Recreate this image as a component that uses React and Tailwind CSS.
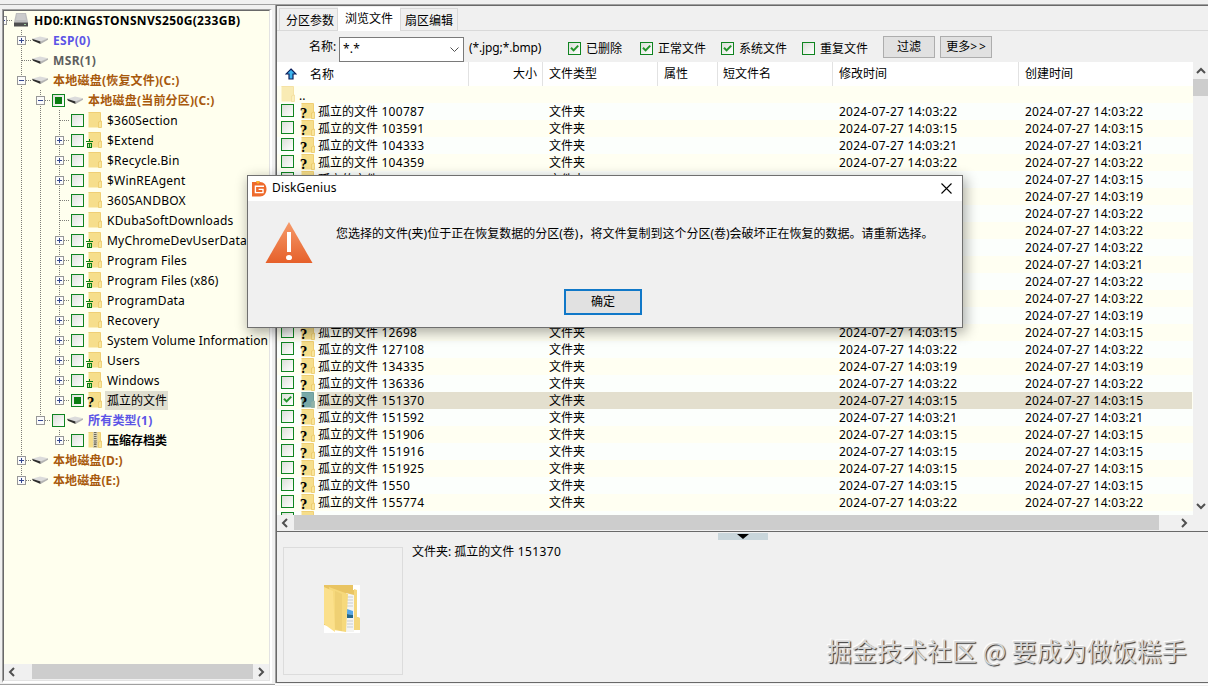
import React from 'react';
import clsx from 'clsx';

const tree = [
  { depth: 0, open: true, icon: 'disk', label: 'HD0:KINGSTONSNVS250G(233GB)', style: 'font-bold text-black tracking-[0.34px]' },
  { depth: 1, open: false, icon: 'drive', label: 'ESP(0)', style: 'font-bold text-[#5c55e6] tracking-[0.3px]' },
  { depth: 1, icon: 'drive', label: 'MSR(1)', style: 'font-bold text-[#5e5e5e] tracking-[0.4px]' },
  { depth: 1, open: true, icon: 'drive', label: '本地磁盘(恢复文件)(C:)', style: 'font-bold text-[#a8590c] tracking-[0.22px]' },
  { depth: 2, open: true, check: 'partial', icon: 'drive', label: '本地磁盘(当前分区)(C:)', style: 'font-bold text-[#a8590c] tracking-[0.22px]' },
  { depth: 3, check: 'off', icon: 'folder', label: '$360Section' },
  { depth: 3, open: false, check: 'off', icon: 'folder', deleted: true, label: '$Extend' },
  { depth: 3, open: false, check: 'off', icon: 'folder', label: '$Recycle.Bin' },
  { depth: 3, open: false, check: 'off', icon: 'folder', label: '$WinREAgent' },
  { depth: 3, check: 'off', icon: 'folder', label: '360SANDBOX' },
  { depth: 3, check: 'off', icon: 'folder', label: 'KDubaSoftDownloads' },
  { depth: 3, open: false, check: 'off', icon: 'folder', deleted: true, label: 'MyChromeDevUserData' },
  { depth: 3, open: false, check: 'off', icon: 'folder', deleted: true, label: 'Program Files' },
  { depth: 3, open: false, check: 'off', icon: 'folder', deleted: true, label: 'Program Files (x86)' },
  { depth: 3, open: false, check: 'off', icon: 'folder', deleted: true, label: 'ProgramData' },
  { depth: 3, open: false, check: 'off', icon: 'folder', label: 'Recovery' },
  { depth: 3, open: false, check: 'off', icon: 'folder', label: 'System Volume Information', style: 'text-black tracking-[0.14px]' },
  { depth: 3, open: false, check: 'off', icon: 'folder', deleted: true, label: 'Users' },
  { depth: 3, open: false, check: 'off', icon: 'folder', deleted: true, label: 'Windows' },
  { depth: 3, open: false, check: 'partial', icon: 'lost', label: '孤立的文件', selected: true, last: true, style: 'text-black' },
  { depth: 2, open: true, check: 'off', icon: 'drive', label: '所有类型(1)', style: 'font-bold text-[#5c55e6] tracking-[0.2px]', last: true },
  { depth: 3, open: false, check: 'off', icon: 'zip', label: '压缩存档类', style: 'font-bold text-black', last: true, hide: [2] },
  { depth: 1, open: false, icon: 'drive', label: '本地磁盘(D:)', style: 'font-bold text-[#a8590c] tracking-[0.2px]' },
  { depth: 1, open: false, icon: 'drive', label: '本地磁盘(E:)', style: 'font-bold text-[#a8590c] tracking-[0.1px]', last: true },
];

const files = [
  ['100787', '22'], ['103591', '15'], ['104333', '21'], ['104359', '22'],
  ['104781', '15'], ['105264', '19'], ['106010', '22'], ['107352', '22'],
  ['108116', '22'], ['110273', '21'], ['112904', '22'], ['115530', '22'],
  ['118247', '19'], ['12698', '15'], ['127108', '22'], ['134335', '19'],
  ['136336', '22'], ['151370', '15'], ['151592', '21'], ['151906', '15'],
  ['151916', '15'], ['151925', '15'], ['1550', '15'], ['155774', '22'],
];

const filters = [
  { label: '已删除', checked: true, style: 'w-[72px]' },
  { label: '正常文件', checked: true, style: 'w-[81px]' },
  { label: '系统文件', checked: true, style: 'w-[81px]' },
  { label: '重复文件', checked: false, style: 'w-[81px]' },
];

function CheckBox({ state }) {
  return (
    <span className="relative block w-[13px] h-[13px] shrink-0 border border-[#0f8420] bg-linear-to-br from-[#dcdfd9] to-white">
      {state === 'on' && (
        <svg className="block w-[11px] h-[11px]" viewBox="0 0 11 11">
          <path d="M2 4.8 L4.6 7.4 L9.2 2.6" fill="none" stroke="#22952a" strokeWidth="2" />
        </svg>
      )}
      {state === 'partial' && <span className="block w-[7px] h-[7px] m-[2px] bg-[#0b7d12]" />}
    </span>
  );
}

function Folder({ selected, zip }) {
  return (
    <svg className="block w-[14px] h-[16px]" viewBox="0 0 14 16">
      <path d="M0.5 0.5 H12.5 V15.5 H0.5 Z" fill={selected ? '#7aa9a8' : '#f6de8b'} />
      <path d="M0.5 0.5 H12.5 V9" fill="none" stroke={selected ? '#6b9d9d' : '#f0cf74'} />
      <path d="M10.5 15.5 V10 L13.5 9 V15.5 Z" fill={selected ? '#8fb3a8' : '#f9e59a'} stroke={selected ? '#8caea4' : '#ebc968'} strokeWidth="0.8" />
      {zip && (
        <>
          <path d="M5 0 H9.5 V16 H5 Z" fill="#d9d2b5" />
          <path d="M7.2 0 V16" stroke="#6f6b5c" strokeWidth="2.6" strokeDasharray="1 1" />
          <path d="M6 8 H8.5 V12 H6 Z" fill="#9a9686" />
        </>
      )}
    </svg>
  );
}

function Question() {
  return (
    <span className="absolute left-[-1px] top-[4px] font-['DejaVu_Serif',serif] font-bold text-[12px] leading-[14px] text-black">?</span>
  );
}

function Drive() {
  return (
    <svg className="block w-4 h-[10px]" viewBox="0 0 16 10">
      <path d="M0 3.8 L8 1.4 L16 3.2 L8.6 7 Z" fill="#dcdcdc" />
      <path d="M0 3.8 L8.6 6.6 L8.6 9 L1 5.8 Z" fill="#2e2e2e" />
      <path d="M8.6 6.4 L16 3.2 V4.8 L8.6 9 Z" fill="#b4b4b4" />
    </svg>
  );
}

function Disk() {
  return (
    <svg className="block w-[14px] h-4" viewBox="0 0 14 16">
      <path d="M2 1 H12 L14 10 H0 Z" fill="#bdbdbd" />
      <path d="M3 2 H11 L12 8 H2 Z" fill="#cbcbcb" />
      <path d="M0 10 H14 V14.5 H0 Z" fill="#4f4f4f" />
      <path d="M0 10.5 H14" stroke="#8c8c8c" />
      <path d="M10 12.5 H12" stroke="#9fd09f" />
    </svg>
  );
}

function Trash() {
  return (
    <svg className="absolute left-[-2px] top-[7px] w-[8px] h-[10px]" viewBox="0 0 8 10">
      <path d="M3 0 H4 V2 H3 Z M0 2 H7 V3 H0 Z" fill="#0b7d12" />
      <path d="M1 4 H6 V9 H1 Z" fill="#c9e0a0" />
      <path d="M1 4 H6 V5 H1 Z M1 8 H6 V9 H1 Z M1 4 H2 V9 H1 Z M3 4 H4 V9 H3 Z M5 4 H6 V9 H5 Z" fill="#0b7d12" />
    </svg>
  );
}

function NodeIcon({ node }) {
  if (node.icon === 'disk') return <Disk />;
  if (node.icon === 'drive') return <Drive />;
  return (
    <span className="relative block">
      <Folder zip={node.icon === 'zip'} />
      {node.deleted && <Trash />}
      {node.icon === 'lost' && <Question />}
    </span>
  );
}

function Guide({ node, own }) {
  const line = { stroke: '#7d7d78', strokeDasharray: '1 1', fill: 'none' };
  return (
    <svg className="block w-[19px] h-5 shrink-0" viewBox="0 0 19 20" shapeRendering="crispEdges">
      {node.depth > 0 && <path d={own && node.last ? 'M9.5 0 V10' : 'M9.5 0 V20'} {...line} />}
      {own && <path d="M10 10.5 H19" {...line} />}
      {own && node.open !== undefined && (
        <>
          <rect x="5.5" y="6.5" width="8" height="8" fill="#fbfbfb" stroke="#979797" />
          <path d={node.open ? 'M7 10.5 H12' : 'M7 10.5 H12 M9.5 8 V13'} stroke="#35478f" />
        </>
      )}
    </svg>
  );
}

function TreeRow({ node }) {
  const guides = [];
  for (let level = 1; level <= node.depth; level++) {
    guides.push(
      node.hide?.includes(level)
        ? <span key={level} className="w-[19px] shrink-0" />
        : <Guide key={level} node={level === node.depth ? node : { depth: level }} own={level === node.depth} />
    );
  }
  return (
    <div className={clsx('flex items-center h-5 whitespace-nowrap', node.depth === 0 ? 'ml-[-11px]' : 'ml-2')}>
      {node.depth === 0 ? <Guide node={node} own /> : guides}
      {node.check && <span className="ml-[2px]"><CheckBox state={node.check} /></span>}
      <span className={clsx('shrink-0', node.depth === 3 ? 'ml-1' : node.depth === 1 ? 'ml-px' : 'ml-[2px]')}>
        <NodeIcon node={node} />
      </span>
      <span
        className={clsx(
          'leading-[19px]',
          node.style || 'text-black tracking-[0.2px]',
          node.depth === 3 ? 'ml-[3px] pl-[2px] pr-px' : node.depth === 0 ? 'ml-[6px]' : 'ml-[5px]',
          node.selected && 'bg-[#e0dfd0]'
        )}
      >
        {node.label}
      </span>
    </div>
  );
}

function Arrow({ dir }) {
  const paths = {
    left: 'M7 1 L3 5 L7 9',
    right: 'M3 1 L7 5 L3 9',
    up: 'M1 7 L5 3 L9 7',
    down: 'M1 3 L5 7 L9 3',
  };
  return (
    <svg className="block w-[10px] h-[10px]" viewBox="0 0 10 10">
      <path d={paths[dir]} fill="none" stroke="#505050" strokeWidth="2" />
    </svg>
  );
}

function TreePanel() {
  return (
    <aside className="w-[275px] shrink-0 flex flex-col border-t border-[#a0a0a0]">
      <div className="h-[676px] mt-1 ml-[2px] w-[270px] flex flex-col border-t border-l border-[#a0a0a0] border-r-2 border-r-white border-b-2 border-b-white">
        <div className="flex-1 flex flex-col overflow-hidden border-t border-l border-t-[#696969] border-l-[#696969] border-r border-b border-r-[#e3e3e3] border-b-[#e3e3e3]">
          <div className="flex-1 overflow-hidden bg-[#ffffee]">
            <div className="mt-[-1px]">
              {tree.map((node, i) => <TreeRow key={i} node={node} />)}
            </div>
          </div>
          <div className="h-[15px] mb-px flex items-center justify-between bg-[#f0f0f0] shrink-0">
            <span className="w-7 pl-[3px]"><Arrow dir="left" /></span>
            <span className="h-full flex-1 bg-[#cdcdcd]" />
            <span className="w-4 pl-[3px]"><Arrow dir="right" /></span>
          </div>
        </div>
      </div>
      <div className="mt-[1px] h-px bg-[#a0a0a0]" />
      <div className="h-px bg-white" />
    </aside>
  );
}

function Toolbar() {
  return (
    <>
      <div className="h-[25px] flex items-end pl-[2px] border-b border-[#d9d9d9]">
        <span className="w-[59px] h-[22px] pl-[6px] border border-b-0 border-[#d9d9d9] leading-[24px]">分区参数</span>
        <span className="w-[62px] h-6 mb-[-1px] bg-white text-center leading-[24px]">浏览文件</span>
        <span className="w-[58px] h-[22px] border border-b-0 border-[#d9d9d9] text-center leading-[24px]">扇区编辑</span>
      </div>
      <div className="h-[31px] flex items-start">
        <span className="w-[62px] pl-8 pt-[6px] leading-[19px] whitespace-nowrap">名称:</span>
        <span className="w-[125px] h-[25px] mt-[6px] pl-[3px] pr-1 flex items-center justify-between bg-white border border-[#7a7a7a]">
          <span className="pb-[2px] tracking-[0.2px]">*.*</span>
          <svg className="w-[9px] h-[9px]" viewBox="0 0 9 9"><path d="M0.5 2.5 L4.5 6.5 L8.5 2.5" fill="none" stroke="#505050" /></svg>
        </span>
        <span className="w-[104px] pl-[5px] pt-2 leading-[18px] tracking-[-0.12px]">(*.jpg;*.bmp)</span>
        {filters.map(f => (
          <span key={f.label} className={clsx('flex items-center gap-[5px] mt-2 h-[18px] whitespace-nowrap', f.style)}>
            <CheckBox state={f.checked ? 'on' : 'off'} />
            <span className="pt-[2px]">{f.label}</span>
          </span>
        ))}
        <button className="w-[52px] h-[22px] mt-[5px] bg-[#e1e1e1] border border-[#adadad] leading-5">过滤</button>
        <button className="w-[52px] h-[22px] mt-[5px] ml-[5px] pl-[2px] bg-[#e1e1e1] border border-[#adadad] leading-5 whitespace-nowrap">
          更多<span className="tracking-[2px]">&gt;&gt;</span>
        </button>
      </div>
    </>
  );
}

function FileRow({ name, sec, index }) {
  const selected = name === '151370';
  return (
    <div className={clsx('flex h-[17px] leading-[17px] shrink-0 whitespace-nowrap', index % 2 ? 'bg-[#fffff2]' : 'bg-[#fcfffc]')}>
      <span className="w-6 pl-1 pt-px"><CheckBox state={selected ? 'on' : 'off'} /></span>
      <span className="relative w-4 shrink-0">
        <Folder selected={selected} />
        {name && <Question />}
      </span>
      {name && (
        <div className={clsx('flex flex-1 pl-px', selected && 'bg-[#e3dfce]')}>
          <span className="w-[231px]">孤立的文件<span className="tracking-[0.3px]"> {name}</span></span>
          <span className="w-[290px]">文件夹</span>
          <span className="w-[186px] tracking-[0.26px]">2024-07-27 14:03:{sec}</span>
          <span className="tracking-[0.26px]">2024-07-27 14:03:{sec}</span>
        </div>
      )}
      <span className="w-px" />
    </div>
  );
}

function FileList() {
  return (
    <div className="h-[453px] flex shrink-0">
      <div className="w-[916px] flex flex-col overflow-hidden bg-[#fffff2]">
        <div className="h-6 flex shrink-0 bg-white leading-[23px] *:border-r *:border-[#e2e2e2] *:shrink-0">
          <div className="w-[192px] flex items-center gap-[13px] pl-2">
            <svg className="w-3 h-3" viewBox="0 0 12 12">
              <path d="M6 1 L11 6 H8 V11 H4 V6 H1 Z" fill="#3cb4ee" stroke="#0c1f5c" strokeWidth="1.2" />
            </svg>
            <span>名称</span>
          </div>
          <div className="w-[74px] text-right pr-[5px]">大小</div>
          <div className="w-[115px] pl-[6px]">文件类型</div>
          <div className="w-[60px] pl-[6px]">属性</div>
          <div className="w-[115px] pl-[5px]">短文件名</div>
          <div className="w-[186px] pl-[6px]">修改时间</div>
          <div className="w-[174px] pl-[6px] border-r-0!">创建时间</div>
        </div>
        <div className="h-[17px] flex shrink-0 pl-1 gap-1 leading-[19px]">
          <span className="opacity-60"><Folder /></span>
          <span>..</span>
        </div>
        {files.map(([name, sec], i) => <FileRow key={name} name={name} sec={sec} index={i} />)}
        {/* row cut by the scrollbar, only its icons peek out */}
        <FileRow index={files.length} />
      </div>
      <div className="w-[15px] flex flex-col items-center bg-[#f0f0f0]">
        <span className="h-[17px] pt-1"><Arrow dir="up" /></span>
        <span className="w-full h-[17px] bg-[#cdcdcd]" />
        <span className="mt-auto h-[14px]"><Arrow dir="down" /></span>
      </div>
    </div>
  );
}

function PreviewFolder() {
  return (
    <svg className="w-9 h-12" viewBox="0 0 36 48">
      <path d="M0 0 H36 V48 H0 Z" fill="#fff" />
      <path d="M0 0 H29 V5 H33 V32 L36 33 V45 H30 L0 40 Z" fill="#e9c462" />
      <path d="M30 4 L33 5 V32 L36 33 V45 H30 Z" fill="#f5d77b" />
      <path d="M22 8 L30 10 V47 H22 Z" fill="#f4f4f2" />
      <path d="M23 12 H29 M23 15 H29 M23 18 H29 M23 21 H29 M23 36 H29 M23 39 H29 M23 42 H29" stroke="#c8cdd2" strokeWidth="1" />
      <path d="M23 24 L29 26 V30 L23 29 Z" fill="#55a7e8" />
      <path d="M23 29 L29 30 V33 H23 Z" fill="#23668a" />
      <path d="M5 2 L24 9 L22 47 L10 45 Z" fill="#f6d97c" />
      <path d="M11 6 L18 9 V46 L11 44 Z" fill="#e8c769" opacity="0.5" />
      <path d="M0 2 L9 6 L11 47 L0 39 Z" fill="#fbe08b" />
    </svg>
  );
}

function BottomPanel() {
  return (
    <div className="relative flex-1 flex border-t border-[#696969] pt-[15px] pl-[6px]">
      <div className="w-[120px] h-[128px] flex items-center justify-center border border-[#dcdcdc]">
        <span className="pr-[2px] pb-1"><PreviewFolder /></span>
      </div>
      <p className="ml-[9px] mt-[-4px] leading-[18px]">文件夹: 孤立的文件<span className="tracking-[0.35px]"> 151370</span></p>
      {/* splitter handle */}
      <span className="absolute left-[441px] top-px w-[50px] h-[7px] flex justify-center bg-[#c9d6db]">
        <svg className="w-3 h-[6px]" viewBox="0 0 12 6"><path d="M0 1 H12 L6 6 Z" fill="#000" /></svg>
      </span>
    </div>
  );
}

function Dialog() {
  return (
    <div className="absolute left-[247px] top-[175px] w-[716px] h-[153px] flex flex-col border border-[#6f6f6f] bg-[#f0f0f0] shadow-[2px_4px_12px_1px_rgba(0,0,0,0.32)]">
      <div className="h-[25px] flex items-center pl-1 pr-[10px] bg-white shrink-0">
        <svg className="w-[15px] h-4" viewBox="0 0 15 16">
          <path d="M0 1 H4 L5 0 H7 L8 1 C12 1 14.5 4 14.5 8 C14.5 12.5 12 15.5 8 15.5 H0 Z" fill="#ee6a2c" />
          <path d="M4 1 L6 3 L8 1 L6.5 0 H5 Z" fill="#f9b52e" />
          <path d="M12 5.2 H3.4 V11.6 H11 V8.4 H6.6" fill="none" stroke="#fff" strokeWidth="1.4" />
        </svg>
        <span className="ml-[5px] pb-px tracking-[0.15px]">DiskGenius</span>
        <svg className="ml-auto w-[11px] h-[11px]" viewBox="0 0 11 11">
          <path d="M0.5 0.5 L10.5 10.5 M10.5 0.5 L0.5 10.5" stroke="#000" strokeWidth="1.1" />
        </svg>
      </div>
      <div className="flex pl-[17px] pt-[21px]">
        <svg className="w-12 h-[42px]" viewBox="0 0 48 42">
          <defs>
            <linearGradient id="warn" x1="0" y1="0" x2="0" y2="1">
              <stop offset="0" stopColor="#f59a6a" />
              <stop offset="1" stopColor="#e6602a" />
            </linearGradient>
          </defs>
          <path d="M24 0 L47.5 41 H0.5 Z" fill="url(#warn)" />
          <path d="M22 10 H26 V30 H22 Z" fill="#fff" />
          <ellipse cx="24" cy="35.5" rx="3" ry="2.6" fill="#fff" />
        </svg>
        <p className="ml-[23px] mt-[3px] leading-[18px] whitespace-nowrap">
          您选择的文件(夹)位于正在恢复数据的分区(卷)，将文件复制到这个分区(卷)会破坏正在恢复的数据。请重新选择。
        </p>
      </div>
      <button className="w-[78px] h-[26px] mt-[25px] ml-[316px] bg-[#e1e1e1] border-2 border-[#1078c8] leading-[22px]">确定</button>
    </div>
  );
}

export default function App() {
  return (
    <div className="relative w-[1208px] h-[686px] overflow-hidden bg-[#f0f0f0] pt-1 text-[12px] text-black font-['Noto_Sans','Noto_Sans_CJK_SC',sans-serif]">
      <div className="flex h-[682px]">
        <TreePanel />
        <main className="w-[933px] shrink-0 flex flex-col">
          <div className="h-[679px] flex flex-col border-t border-l border-[#a0a0a0]">
            <div className="flex-1 flex flex-col border-t border-l border-b border-[#696969]">
              <Toolbar />
              <FileList />
              <div className="h-4 flex items-center bg-[#f0f0f0] shrink-0">
                <span className="w-[17px] pl-[3px]"><Arrow dir="left" /></span>
                <span className="w-[865px] h-[15px] self-start bg-[#cdcdcd]" />
                <span className="ml-5"><Arrow dir="right" /></span>
              </div>
              <BottomPanel />
            </div>
          </div>
          <div className="mt-px h-px bg-white" />
        </main>
      </div>
      <Dialog />
      <div className="absolute left-[827px] top-[632px] text-[25px] leading-[36px] whitespace-nowrap text-[#d6d6d6] font-['Noto_Sans_CJK_SC',sans-serif] [text-shadow:1px_1px_1px_#333,-1px_-1px_1px_#fff]">
        掘金技术社区 @ 要成为做饭糕手
      </div>
    </div>
  );
}
